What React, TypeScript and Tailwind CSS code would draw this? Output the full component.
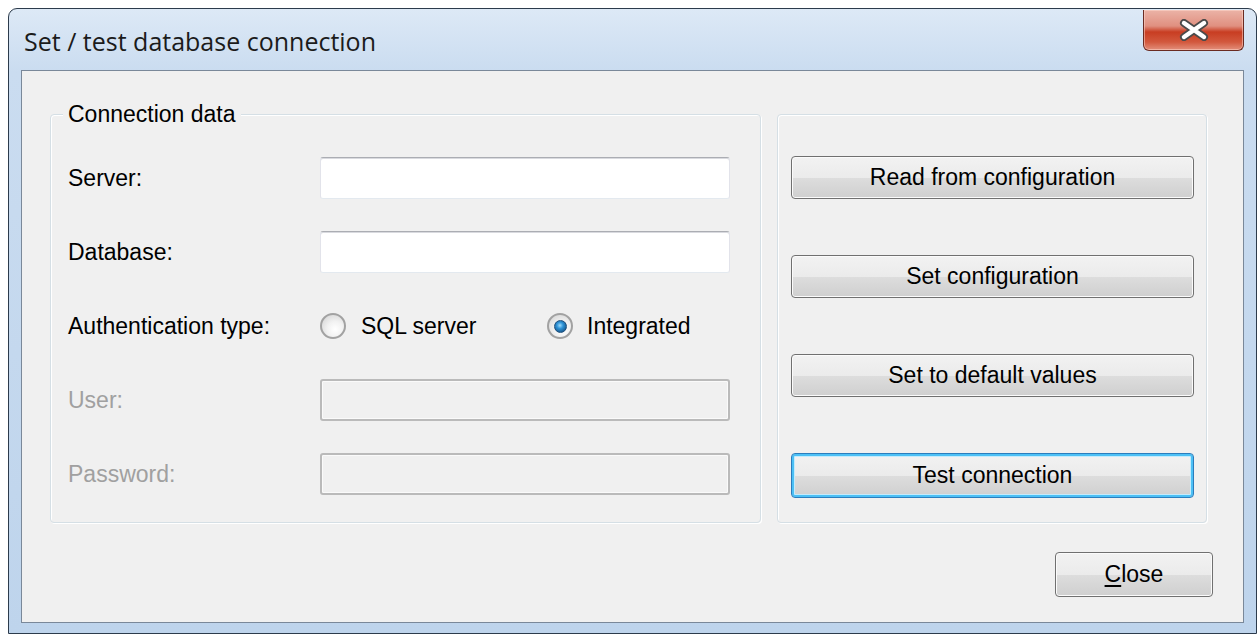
import React from "react";

const btnBase =
  "flex h-[43px] w-full items-center justify-center rounded-[4px] border bg-[linear-gradient(#f2f2f2_0%,#ebebeb_50%,#dddddd_51%,#cfcfcf_100%)] text-[23px] leading-none text-black";

const Button = ({ label, focused }: { label: React.ReactNode; focused?: boolean }) => (
  <button
    className={
      focused
        ? btnBase + " h-[45px] border-[#2b7dbd] shadow-[inset_0_0_0_2px_#4cc0f5,inset_0_0_0_3px_#c4ebfc]"
        : btnBase + " border-[#707070] shadow-[inset_0_0_0_1px_#fbfbfb]"
    }
  >
    {label}
  </button>
);

const Radio = ({ checked }: { checked?: boolean }) => (
  <span className="flex h-[26px] w-[26px] shrink-0 items-center justify-center rounded-full border-2 border-[#a2a2a2] bg-[radial-gradient(circle_at_60%_65%,#ffffff_0%,#f2f2f2_40%,#cfcfcf_100%)]">
    {checked && (
      <span className="h-[13px] w-[13px] rounded-full border border-[#1d4f7c] bg-[radial-gradient(circle_at_45%_40%,#9fdcfa_0%,#2f94d8_35%,#0c3d6b_100%)]" />
    )}
  </span>
);

const TextBox = ({ disabled }: { disabled?: boolean }) =>
  disabled ? (
    <div className="h-[42px] w-[410px] rounded-[3px] border-2 border-[#bababa] bg-[#f0f0f0] shadow-[inset_0_0_0_1px_#fafafa]" />
  ) : (
    <div className="h-[42px] w-[410px] rounded-[3px] border border-[#e2e3ea] border-t-[#abadb3] border-b-[#e3e9ef] bg-white shadow-[inset_0_1px_0_#d9dadf]" />
  );

export default function App() {
  return (
    <div className="h-[635px] w-[1258px] overflow-hidden bg-white pl-[8px] pt-[8px] font-['Liberation_Sans',Arial,sans-serif] text-[23px] text-black">
      <div className="flex h-[626px] w-[1249px] flex-col rounded-t-[9px] border border-[#2c3b4c] bg-[linear-gradient(180deg,#dde9f6_0%,#cadcf0_10%,#bed4ec_100%)] px-[12px] pb-[10px]">
        {/* title bar */}
        <div className="flex h-[61px] shrink-0 items-start justify-between">
          <span className="mt-[16px] pl-[3px] font-['Open_Sans',sans-serif] text-[25px] leading-[33px] text-[#1b1b1b]">
            Set / test database connection
          </span>
          <div className="mt-[1px] flex h-[41px] w-[101px] items-center justify-center rounded-b-[6px] border border-t-0 border-[#6a2b22] bg-[linear-gradient(180deg,#ebb3a7_0%,#e09080_40%,#c83d22_55%,#d2583d_80%,#e38f7b_100%)] shadow-[inset_0_0_0_1px_rgba(255,220,210,0.5)]">
            <svg width="32" height="22" viewBox="0 0 32 22">
              <path d="M6 4 L26 18 M26 4 L6 18" stroke="#4a4a4a" strokeWidth="8" strokeLinecap="round" />
              <path d="M6 4 L26 18 M26 4 L6 18" stroke="#ffffff" strokeWidth="4.5" strokeLinecap="round" />
            </svg>
          </div>
        </div>

        {/* client area */}
        <div className="flex flex-1 flex-col border border-[#7a8899] bg-[#f0f0f0] pl-[28px] pt-[43px]">
          <div className="flex gap-[16px]">
            <div className="relative h-[409px] w-[711px] rounded-[4px] border border-[#d5dfe5] pl-[17px] pt-[42px] shadow-[inset_1px_1px_0_#ffffff,1px_1px_0_#ffffff]">
              <span className="absolute left-[12px] top-[-14px] bg-[#f0f0f0] px-[5px] leading-[26px]">
                Connection data
              </span>
              <div className="grid auto-rows-[42px] grid-cols-[252px_410px] items-center gap-y-[32px]">
                <span>Server:</span>
                <TextBox />
                <span>Database:</span>
                <TextBox />
                <span>Authentication type:</span>
                <div className="flex items-center">
                  <label className="flex w-[227px] items-center gap-[15px]">
                    <Radio />
                    <span>SQL server</span>
                  </label>
                  <label className="flex items-center gap-[14px]">
                    <Radio checked />
                    <span>Integrated</span>
                  </label>
                </div>
                <span className="text-[#a0a0a0]">User:</span>
                <TextBox disabled />
                <span className="text-[#a0a0a0]">Password:</span>
                <TextBox disabled />
              </div>
            </div>

            <div className="flex h-[409px] w-[430px] flex-col gap-[56px] rounded-[4px] border border-[#d5dfe5] pl-[13px] pr-[12px] pt-[41px] shadow-[inset_1px_1px_0_#ffffff,1px_1px_0_#ffffff]">
              <Button label="Read from configuration" />
              <Button label="Set configuration" />
              <Button label="Set to default values" />
              <Button label="Test connection" focused />
            </div>
          </div>

          <div className="mt-[29px] flex w-[1163px] justify-end">
            <div className="w-[158px] [&>button]:h-[45px]">
              <Button
                label={
                  <span>
                    <span className="underline underline-offset-[3px]">C</span>lose
                  </span>
                }
              />
            </div>
          </div>
        </div>
      </div>
    </div>
  );
}
